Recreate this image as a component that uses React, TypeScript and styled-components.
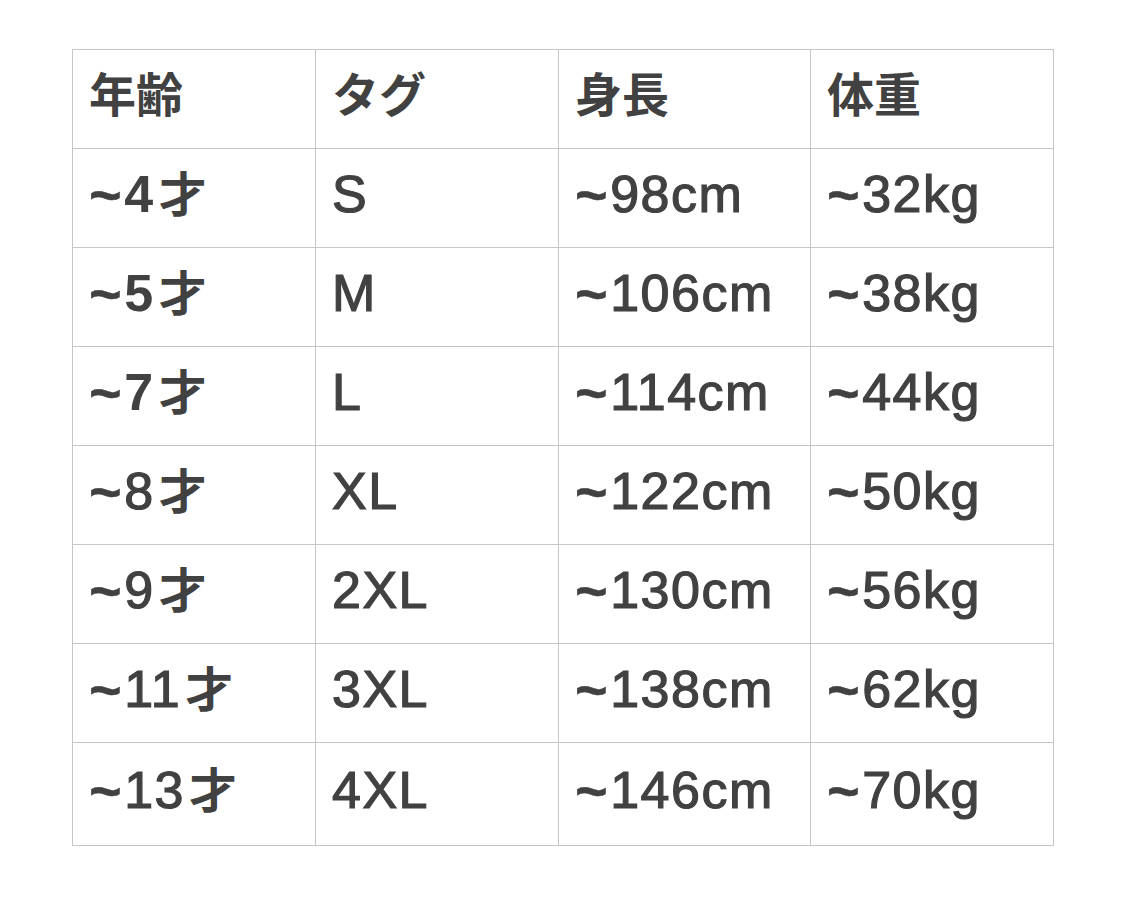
import { createGlobalStyle, styled } from 'styled-components'

const GlobalStyle = createGlobalStyle`
  body {
    margin: 0;
    background: #fff;
    font-family: 'Liberation Sans', 'Noto Sans CJK JP', sans-serif;
  }
`

type Row = { age: string; tag: string; height: string; weight: string; strong?: boolean }

const rows: Row[] = [
  { age: '4', tag: 'S', height: '98cm', weight: '32kg', strong: true },
  { age: '5', tag: 'M', height: '106cm', weight: '38kg', strong: true },
  { age: '7', tag: 'L', height: '114cm', weight: '44kg', strong: true },
  { age: '8', tag: 'XL', height: '122cm', weight: '50kg' },
  { age: '9', tag: '2XL', height: '130cm', weight: '56kg' },
  { age: '11', tag: '3XL', height: '138cm', weight: '62kg' },
  { age: '13', tag: '4XL', height: '146cm', weight: '70kg' },
]

const Page = styled.div`
  padding: 49px 0 0 72px;
`

const Table = styled.table`
  border-collapse: collapse;
  table-layout: fixed;
  width: 981px;
  color: #414141;

  & td,
  & th {
    border: 1px solid #c6c6c6;
    padding: 0 0 8px 16px;
    text-align: left;
    vertical-align: middle;
    height: 90px;
    line-height: 60px;
    white-space: nowrap;
  }

  & th {
    padding-bottom: 14px;
    height: 84px;
  }

  & tr:last-child td {
    height: 94px;
  }
`

const Head = styled.th`
  font-size: 47px;
  font-weight: 700;
  font-family: 'Noto Sans CJK JP', sans-serif;
`

const Cell = styled.td<{ $strong?: boolean }>`
  font-size: 52px;
  letter-spacing: 1.5px;
  font-weight: ${(p) => (p.$strong ? 700 : 400)};
  -webkit-text-stroke: ${(p) => (p.$strong ? '0' : '1.2px')} #414141;
`

const Tilde = styled.span`
  font-size: 56px;
  font-weight: 700;
  line-height: 0;
  -webkit-text-stroke: 0.4px #414141;
  position: relative;
  top: 2px;
  margin-right: 1px;
`

const Kanji = styled.span`
  font-family: 'Noto Sans CJK JP', sans-serif;
  font-weight: 700;
  font-size: 48px;
  line-height: 0;
  margin-left: 4px;
  -webkit-text-stroke: 0;
`

export default function App() {
  return (
    <Page>
      <GlobalStyle />
      <Table>
        <colgroup>
          <col style={{ width: 243 }} />
          <col style={{ width: 243 }} />
          <col style={{ width: 252 }} />
          <col style={{ width: 243 }} />
        </colgroup>
        <thead>
          <tr>
            <Head>年齢</Head>
            <Head>タグ</Head>
            <Head>身長</Head>
            <Head>体重</Head>
          </tr>
        </thead>
        <tbody>
          {rows.map((r) => (
            <tr key={r.age}>
              <Cell $strong={r.strong}>
                <Tilde>~</Tilde>
                {r.age}
                <Kanji>才</Kanji>
              </Cell>
              <Cell>{r.tag}</Cell>
              <Cell>
                <Tilde>~</Tilde>
                {r.height}
              </Cell>
              <Cell>
                <Tilde>~</Tilde>
                {r.weight}
              </Cell>
            </tr>
          ))}
        </tbody>
      </Table>
    </Page>
  )
}
